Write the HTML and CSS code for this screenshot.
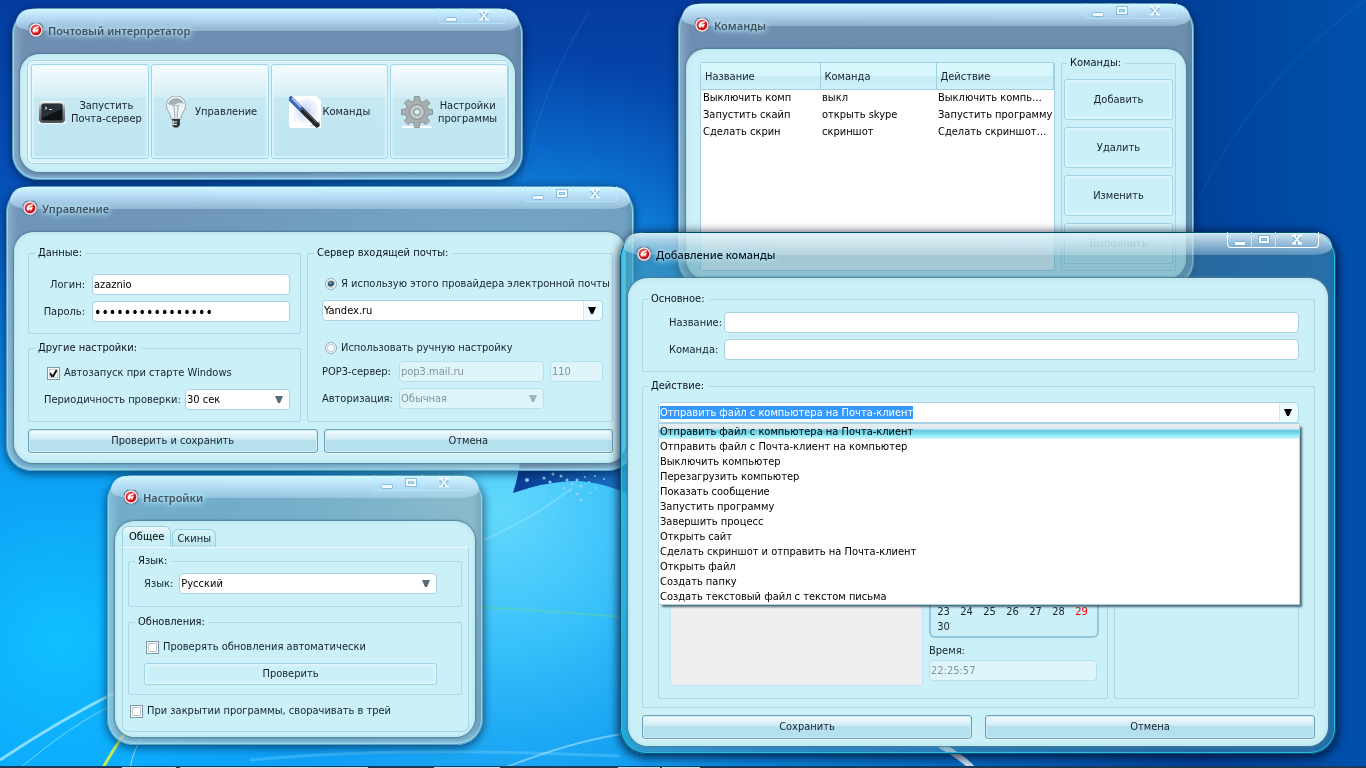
FILE: index.html
```html
<!DOCTYPE html>
<html lang="ru">
<head>
<meta charset="utf-8">
<title>Почтовый интерпретатор</title>
<link rel="stylesheet" href="styles.css">
</head>
<body>
<svg class="defs" width="0" height="0" aria-hidden="true">
  <defs>
    <radialGradient id="badge" cx=".4" cy=".35" r=".7"><stop offset="0" stop-color="#ff6a5c"/><stop offset=".6" stop-color="#e3151b"/><stop offset="1" stop-color="#c01016"/></radialGradient>
    <symbol id="app" viewBox="0 0 16 16">
      <path d="M4 .8H12L15.200 4V12L12 15.200H4L.8 12V4Z" fill="#6d7f94"/>
      <circle cx="8" cy="8" r="6.700" fill="#e8edf4"/>
      <circle cx="8" cy="8" r="5.300" fill="url(#badge)"/>
      <path d="M4.600 9.600C4.300 6.300 7 4 11.400 4.300L10 6.200C8.400 6 7.400 6.600 7.200 7.500L11 7L9 11L7.800 9.200L7 9.400L6.400 11.300Z" fill="#fff"/>
    </symbol>
    <symbol id="min" viewBox="0 0 12 12"><rect x=".5" y="7.500" width="11" height="4" rx="1" fill="#fff" stroke="#79b4dc"/></symbol>
    <symbol id="max" viewBox="0 0 12 12"><rect x="2" y="3" width="8" height="5" fill="none" stroke="#79b4dc" stroke-width="4"/><rect x="2" y="3" width="8" height="5" fill="none" stroke="#fff" stroke-width="2"/></symbol>
    <symbol id="close" viewBox="0 0 12 12"><path d="M2.500 2L9.500 10M9.500 2L2.500 10" stroke="#79b4dc" stroke-width="4" fill="none"/><path d="M2.500 1.500L9.500 9.500M9.500 1.500L2.500 9.500M1 1.500H5M7 1.500H11M1 9.500H5M7 9.500H11" stroke="#fff" stroke-width="1.800" fill="none"/></symbol>
  </defs>
</svg>

<svg class="wallpaper" viewBox="0 0 1366 768" preserveAspectRatio="none" aria-hidden="true">
  <defs>
    <linearGradient id="sky" x1="0" y1="0" x2="0" y2="1"><stop offset="0" stop-color="#053ba0"/><stop offset=".25" stop-color="#0552b8"/><stop offset=".6" stop-color="#0987e4"/><stop offset="1" stop-color="#0a9cf6"/></linearGradient>
    <radialGradient id="glow" gradientUnits="userSpaceOnUse" cx="500" cy="510" r="460"><stop offset="0" stop-color="#62d8fc"/><stop offset=".3" stop-color="#38c0fa"/><stop offset=".6" stop-color="#18a2f2" stop-opacity=".75"/><stop offset="1" stop-color="#0a80e0" stop-opacity="0"/></radialGradient>
    <radialGradient id="low" gradientUnits="userSpaceOnUse" cx="60" cy="640" r="400"><stop offset="0" stop-color="#10c0ff"/><stop offset="1" stop-color="#0aa0ff" stop-opacity="0"/></radialGradient>
    <linearGradient id="dusk" x1="0" y1="0" x2="1" y2="0"><stop offset=".46" stop-color="#00419a" stop-opacity="0"/><stop offset=".88" stop-color="#00429a"/><stop offset="1" stop-color="#0050ac"/></linearGradient>
    <linearGradient id="flag" x1="0" y1="0" x2="1" y2="0"><stop offset="0" stop-color="#083a94"/><stop offset="1" stop-color="#1b7ccc"/></linearGradient>
  </defs>
  <rect width="1366" height="768" fill="url(#sky)"/>
  <rect width="1366" height="768" fill="url(#glow)"/>
  <rect width="1366" height="768" fill="url(#low)"/>
  <rect width="1366" height="768" fill="url(#dusk)"/>
  <path d="M521 456H640V499Q600 480 572 481Q545 482 513 493Q518 478 521 456Z" fill="url(#flag)"/>
  <g fill="#8fd2f6"><circle cx="527" cy="480" r="2"/><circle cx="544" cy="478" r="1.500"/><circle cx="550" cy="482" r="1.500"/><circle cx="553" cy="474" r="1.500"/><circle cx="561" cy="476" r="1.500"/><circle cx="567" cy="480" r="1.500"/><circle cx="572" cy="484" r="1.500"/><circle cx="564" cy="488" r="1.500"/><circle cx="577" cy="480" r="1.500"/><circle cx="581" cy="486" r="1.500"/><circle cx="585" cy="477" r="1"/><circle cx="589" cy="482" r="1"/><circle cx="596" cy="488" r="1"/><circle cx="577" cy="494" r="1.500"/><circle cx="590" cy="493" r="1"/><circle cx="570" cy="491" r="1"/><circle cx="581" cy="500" r="1.500"/><circle cx="544" cy="492" r="1"/><circle cx="552" cy="516" r="1"/><circle cx="558" cy="504" r="1"/><circle cx="595" cy="476" r="1"/><circle cx="604" cy="479" r="1"/></g>
  <g fill="none">
    <path d="M0 760Q60 720 120 690" stroke="#bff1ff" stroke-opacity=".7" stroke-width="3"/>
    <path d="M20 768Q70 726 110 706" stroke="#dffaff" stroke-opacity=".5" stroke-width="1"/>
    <path d="M103 768Q118 740 136 720" stroke="#c6ec54" stroke-width="3"/>
    <path d="M130 768Q134 748 142 738" stroke="#9adfff" stroke-width="1"/>
    <path d="M250 760Q400 746 620 756" stroke="#a0e8ff" stroke-opacity=".25" stroke-width="3"/>
    <path d="M504 768Q570 742 622 734" stroke="#c0f0ff" stroke-opacity=".5" stroke-width="2"/>
    <path d="M480 607Q560 612 622 617" stroke="#5fd8a0" stroke-opacity=".5" stroke-width="2"/>
    <path d="M484 540Q540 514 572 488" stroke="#c0f0ff" stroke-opacity=".3" stroke-width="2"/>
    <path d="M940 745Q962 757 972 768" stroke="#fff" stroke-opacity=".8" stroke-width="6"/>
    <path d="M1366 0Q1240 90 1180 240" stroke="#2d7cc8" stroke-opacity=".15" stroke-width="2"/>
    <path d="M524 178Q540 90 590 10" stroke="#4aa6ea" stroke-opacity=".12" stroke-width="2"/>
  </g>
  <rect y="766" width="1366" height="2" fill="#1d3b55"/>
  <path d="M122 767.500H176M180 767.500H368M434 767.500H500M618 767.500H660M662 767.500H700" stroke="#c8e4f4" stroke-width="1"/>
</svg>

<main class="desktop">
  <section class="window w-main" aria-label="Почтовый интерпретатор">
    <header class="bar">
      <svg class="logo"><use href="#app"/></svg><h2>Почтовый интерпретатор</h2>
      <div class="ctl"><button type="button" aria-label="Свернуть"><svg><use href="#min"/></svg></button><button type="button" class="x" aria-label="Закрыть"><svg><use href="#close"/></svg></button></div>
    </header>
    <div class="body body-main">
      <div class="tools">
        <button type="button" class="tool">
          <svg width="28" height="24" viewBox="0 0 28 24"><defs><linearGradient id="tm" x1="0" y1="0" x2="0" y2="1"><stop offset="0" stop-color="#fafafa"/><stop offset=".4" stop-color="#8b9195"/><stop offset="1" stop-color="#4a5054"/></linearGradient></defs><rect y="21" width="28" height="3" rx="1" fill="#fff" opacity=".8"/><rect x="1" y="1" width="26" height="22" rx="4" fill="url(#tm)"/><rect x="3.500" y="3.500" width="21" height="17" rx="2" fill="#0e1317"/><path d="M4 4H24V9Q14 13 4 18Z" fill="#28323a"/><path d="M7 7L9 8.200L7 9.500M11 9.500H14" stroke="#e4e4e4" fill="none"/></svg>
          <span>Запустить<br>Почта-сервер</span></button>
        <button type="button" class="tool t2">
          <svg width="32" height="32" viewBox="0 0 32 32"><path d="M16 0C10 0 6.500 4 6.500 9.500C6.500 14.500 10.500 17 11.500 23H20.500C21.500 17 25.500 14.500 25.500 9.500C25.500 4 22 0 16 0Z" fill="#eef3f6" stroke="#8b9aa2" stroke-width=".8"/><path d="M8 8Q10 2 16 2Q22 2 24 8Q20 6 16 8Q12 10 8 8Z" fill="#a5b0b8"/><path d="M12 10L15 9L17 10L20 9M14 10L15 22M18 10L17 22" fill="none" stroke="#8c9ca4" stroke-width=".8"/><path d="M12 23H20V29L18 31.500H14L12 29Z" fill="#30373b"/><path d="M13 24.500V29M13 26H17M13 28.500H17" stroke="#eef2f4" stroke-width="1.200"/></svg>
          <span>Управление</span></button>
        <button type="button" class="tool t3">
          <svg width="32" height="32" viewBox="0 0 32 32"><defs><radialGradient id="wd"><stop offset="0" stop-color="#b9cdf5"/><stop offset="1" stop-color="#fff"/></radialGradient></defs><path d="M0 0H27L32 5V32H2L0 30Z" fill="#fff"/><circle cx="17" cy="15" r="14" fill="url(#wd)"/><path d="M19 2V12M14 7H24M6 16V26M2 21H10M23 8V16M19 12H27" stroke="#e9f1ff" stroke-width="1.200"/><path d="M20 30H31V25Z" fill="#b8bcc2"/><path d="M2 3L28 29" stroke="#23272b" stroke-width="5" stroke-linecap="round"/><path d="M2 3L11 12" stroke="#3e69bd" stroke-width="5" stroke-linecap="round"/><path d="M3 2L12 11" stroke="#9cc0f2" stroke-width="2"/><path d="M14 13L28 27" stroke="#646c70" stroke-width="1"/></svg>
          <span>Команды</span></button>
        <button type="button" class="tool">
          <svg width="32" height="32" viewBox="0 0 32 32"><rect x="1" y="30" width="30" height="2" fill="#fff"/><g fill="#a7afb1" stroke="#7c8789" stroke-width=".8"><path d="M13 5L13.500 .5H18.500L19 5L22 6.200L25.500 3.500L29 7L26 10.500L27 13L31.500 13.500V18.500L27 19L26 21.500L28.500 25L25 28.500L21.500 26L19 27L18.500 31.500H13.500L13 27L10.500 26L7 28.500L3.500 25L6 21.500L5 19L.5 18.500V13.500L5 13L6 10.500L3.500 7L7 3.500L10.500 6Z"/><circle cx="16" cy="16" r="7.500" fill="#b9c0c1"/><circle cx="16" cy="16" r="5.500" fill="none" stroke="#d4d9da"/><circle cx="16" cy="16" r="3" fill="#dff2f6"/></g></svg>
          <span>Настройки<br>программы</span></button>
      </div>
    </div>
  </section>

  <section class="window w-control" aria-label="Управление">
    <header class="bar">
      <svg class="logo"><use href="#app"/></svg><h2>Управление</h2>
      <div class="ctl"><button type="button" aria-label="Свернуть"><svg><use href="#min"/></svg></button><button type="button" aria-label="Развернуть"><svg><use href="#max"/></svg></button><button type="button" class="x" aria-label="Закрыть"><svg><use href="#close"/></svg></button></div>
    </header>
    <div class="body body-form">
      <div class="control-grid">
        <div class="stack">
          <fieldset class="creds">
            <legend>Данные:</legend>
            <label for="login">Логин:</label><input id="login" type="text" value="azaznio">
            <label for="pass">Пароль:</label><input id="pass" type="password" value="aaaaaaaaaaaaaaaa">
          </fieldset>
          <fieldset class="other">
            <legend>Другие настройки:</legend>
            <label class="check"><input type="checkbox" checked>Автозапуск при старте Windows</label>
            <div class="line"><label for="period">Периодичность проверки:</label><select id="period"><option>30 сек</option></select></div>
          </fieldset>
        </div>
        <fieldset class="server">
          <legend>Сервер входящей почты:</legend>
          <label class="check"><input type="radio" name="srv" checked>Я использую этого провайдера электронной почты</label>
          <select class="combo" aria-label="Провайдер"><option>Yandex.ru</option></select>
          <label class="check manual"><input type="radio" name="srv">Использовать ручную настройку</label>
          <div class="pop">
            <label for="pop3">POP3-сервер:</label><input id="pop3" type="text" value="pop3.mail.ru" disabled><input type="text" value="110" aria-label="Порт" disabled>
            <label for="auth">Авторизация:</label><select id="auth" disabled><option>Обычная</option></select>
          </div>
        </fieldset>
      </div>
      <div class="actions"><button type="button" class="push">Проверить и сохранить</button><button type="button" class="push">Отмена</button></div>
    </div>
  </section>

  <section class="window w-settings" aria-label="Настройки">
    <header class="bar">
      <svg class="logo"><use href="#app"/></svg><h2>Настройки</h2>
      <div class="ctl"><button type="button" aria-label="Свернуть"><svg><use href="#min"/></svg></button><button type="button" aria-label="Развернуть"><svg><use href="#max"/></svg></button><button type="button" class="x" aria-label="Закрыть"><svg><use href="#close"/></svg></button></div>
    </header>
    <div class="body body-settings">
      <div class="tabs" role="tablist"><button type="button" role="tab" aria-selected="true">Общее</button><button type="button" role="tab" aria-selected="false">Скины</button></div>
      <div class="panel" role="tabpanel">
        <fieldset class="lang">
          <legend>Язык:</legend>
          <label for="lang">Язык:</label><select id="lang"><option>Русский</option></select>
        </fieldset>
        <fieldset class="updates">
          <legend>Обновления:</legend>
          <label class="check"><input type="checkbox">Проверять обновления автоматически</label>
          <button type="button" class="soft">Проверить</button>
        </fieldset>
        <label class="check tray"><input type="checkbox">При закрытии программы, сворачивать в трей</label>
      </div>
    </div>
  </section>

  <section class="window w-commands" aria-label="Команды">
    <header class="bar">
      <svg class="logo"><use href="#app"/></svg><h2>Команды</h2>
      <div class="ctl"><button type="button" aria-label="Свернуть"><svg><use href="#min"/></svg></button><button type="button" aria-label="Развернуть"><svg><use href="#max"/></svg></button><button type="button" class="x" aria-label="Закрыть"><svg><use href="#close"/></svg></button></div>
    </header>
    <div class="body body-commands">
      <div class="list">
        <table>
          <thead><tr><th>Название</th><th>Команда</th><th>Действие</th></tr></thead>
          <tbody>
            <tr><td>Выключить комп</td><td>выкл</td><td>Выключить компь…</td></tr>
            <tr><td>Запустить скайп</td><td>открыть skype</td><td>Запустить программу</td></tr>
            <tr><td>Сделать скрин</td><td>скриншот</td><td>Сделать скриншот…</td></tr>
          </tbody>
        </table>
      </div>
      <fieldset class="cmds">
        <legend>Команды:</legend>
        <button type="button" class="soft">Добавить</button>
        <button type="button" class="soft">Удалить</button>
        <button type="button" class="soft">Изменить</button>
        <button type="button" class="soft" disabled>Выполнить</button>
      </fieldset>
    </div>
  </section>

  <section class="window active w-add" aria-label="Добавление команды">
    <header class="bar">
      <svg class="logo"><use href="#app"/></svg><h2>Добавление команды</h2>
      <div class="ctl"><button type="button" aria-label="Свернуть"><svg><use href="#min"/></svg></button><button type="button" aria-label="Развернуть"><svg><use href="#max"/></svg></button><button type="button" class="x" aria-label="Закрыть"><svg><use href="#close"/></svg></button></div>
    </header>
    <div class="body body-form">
      <fieldset class="basic">
        <legend>Основное:</legend>
        <label for="name">Название:</label><input id="name" type="text">
        <label for="cmd">Команда:</label><input id="cmd" type="text">
      </fieldset>
      <fieldset class="action">
        <legend>Действие:</legend>
        <div class="drop">
          <input id="act" class="combo" type="text" role="combobox" aria-label="Действие" aria-expanded="true" aria-controls="acts" value="Отправить файл с компьютера на Почта-клиент">
          <ul id="acts" role="listbox">
            <li role="option" aria-selected="true">Отправить файл с компьютера на Почта-клиент</li>
            <li role="option">Отправить файл с Почта-клиент на компьютер</li>
            <li role="option">Выключить компьютер</li>
            <li role="option">Перезагрузить компьютер</li>
            <li role="option">Показать сообщение</li>
            <li role="option">Запустить программу</li>
            <li role="option">Завершить процесс</li>
            <li role="option">Открыть сайт</li>
            <li role="option">Сделать скриншот и отправить на Почта-клиент</li>
            <li role="option">Открыть файл</li>
            <li role="option">Создать папку</li>
            <li role="option">Создать текстовый файл с текстом письма</li>
          </ul>
        </div>
        <div class="details">
          <div class="frame when">
            <textarea aria-label="Текст" disabled></textarea>
            <div class="date">
              <table class="cal"><tbody><tr><td>23</td><td>24</td><td>25</td><td>26</td><td>27</td><td>28</td><td class="sun">29</td></tr><tr><td>30</td><td></td><td></td><td></td><td></td><td></td><td></td></tr></tbody></table>
              <label for="time">Время:</label>
              <input id="time" type="text" value="22:25:57" disabled>
            </div>
          </div>
          <div class="frame"></div>
        </div>
      </fieldset>
      <div class="actions wide"><button type="button" class="push">Сохранить</button><button type="button" class="push">Отмена</button></div>
    </div>
  </section>
</main>
<script src="app.js"></script>
</body>
</html>
```
FILE: styles.css
```css
* { box-sizing: border-box; }
html, body { height: 100%; }
body {
  margin: 0;
  overflow: hidden;
  font: 11px/14px "DejaVu Sans Condensed", "Noto Sans", sans-serif;
  color: #14232e;
}
button, input, select, textarea { font: inherit; color: inherit; margin: 0; }
h2, ul { margin: 0; padding: 0; }
label { white-space: nowrap; }
.defs { position: absolute; }
.wallpaper { position: fixed; inset: 0; width: 100%; height: 100%; }
.desktop { position: relative; min-height: 100%; }

/* windows */
.window {
  position: absolute;
  display: flex;
  flex-direction: column;
  padding: 0 8px 8px;
  border-radius: 26px;
  background:
    linear-gradient(90deg, rgba(200, 240, 255, .3), transparent 12px, transparent calc(100% - 10px), rgba(40, 90, 120, .25)),
    rgba(157, 175, 183, .7);
  box-shadow: inset 0 0 0 1px rgba(20, 80, 110, .4), inset 0 0 0 2px #8fd6f0, inset 0 -3px 3px rgba(190, 245, 255, .5), 0 2px 8px 1px rgba(0, 20, 50, .6);
}
.window::before {
  content: "";
  position: absolute;
  inset: 1px 4px auto;
  height: 22px;
  border-radius: 22px 22px 26px 26px / 20px 20px 12px 12px;
  background: linear-gradient(#cdf6ff, rgba(195, 230, 254, .85) 45%, rgba(195, 230, 248, .4));
}
.window.active {
  background:
    linear-gradient(90deg, rgba(0, 190, 240, .5), transparent 20px, transparent calc(100% - 10px), rgba(0, 110, 160, .3)),
    rgba(78, 145, 170, .5);
  box-shadow: inset 0 0 0 1px rgba(0, 50, 80, .8), inset 0 0 0 2px #22bfe8, 0 2px 10px 2px rgba(0, 10, 35, .75);
}
.window.active::before { background: linear-gradient(rgba(235, 250, 255, .85), rgba(235, 248, 255, .25)); }
.w-main { left: 12px; top: 8px; width: 511px; }
.w-control { left: 6px; top: 186px; width: 628px; }
.w-settings { left: 107px; top: 475px; width: 376px; }
.w-commands { left: 678px; top: 3px; width: 516px; }
.w-add { left: 620px; top: 232px; width: 716px; }

.bar { position: relative; display: flex; align-items: flex-start; height: 46px; padding: 0 9px 0 8px; }
.logo { width: 16px; height: 16px; margin: 14px 4px 0 0; }
.bar h2 {
  padding-top: 14px;
  font: 600 11px/18px "Noto Sans", sans-serif;
  color: #41535f;
  text-shadow: 0 0 4px #c9f0ff, 0 0 6px #a9dcf0, 0 0 8px #a9dcf0;
}
.active .bar h2 { font-weight: 500; color: #05121b; }
.ctl { display: flex; margin: 0 0 0 auto; border: 1px solid #b4ecff; border-top: 0; border-radius: 0 0 4px 4px; opacity: .8; }
.active .ctl { border-color: #fff; opacity: 1; }
.ctl button { display: flex; width: 24px; height: 15px; padding: 0; align-items: center; justify-content: center; border: 0; border-right: 1px solid #b4ecff; background: none; }
.ctl .x { width: 42px; border: 0; }
.ctl svg { width: 12px; height: 12px; }

.body {
  position: relative;
  border-radius: 20px;
  background: #ccf0f7;
  box-shadow: 0 0 2px 1px #4b7b93, inset 0 0 4px 1px #b9e4ee;
}
.body-form { display: flex; flex-direction: column; gap: 7px; padding: 14px 13px 10px 14px; }

/* toolbar */
.body-main { padding: 6px 6px 8px 7px; }
.tools { display: grid; grid-template-columns: repeat(4, minmax(0, 1fr)); gap: 2px; padding: 3px 0 4px 3px; border: 1px solid #a3d6e8; border-radius: 6px; background: #d9f4fa; box-shadow: inset 0 0 0 1px #eefbfe; }
.tool {
  display: flex; height: 95px; padding: 0 4px; align-items: center; justify-content: center; gap: 5px;
  border: 1px solid #9fd5ea; border-radius: 3px; line-height: 13px; white-space: nowrap;
  background: linear-gradient(#f6fcfe, #d3eef4 34%, #c6e8f1 36%, #bfe6f3);
  box-shadow: inset 0 0 3px 1px #ecfaff;
}
.tool.t2 { gap: 3px; padding-right: 6px; }
.tool.t3 { gap: 2px; }

/* groups */
fieldset { min-width: 0; margin: 0; border: 1px solid #aed6e4; border-radius: 2px; padding: 14px 10px 11px 6px; }
legend { padding: 0 4px 0 3px; color: #0a141c; }
input[type=text], input[type=password], select {
  width: 100%; min-width: 0; height: 21px; padding: 0 1px; border: 1px solid #a9d3e5; border-radius: 4px; background-color: #fff; color: #000; outline: 0;
}
input[type=password] { font-size: 14px; }
select {
  appearance: none;
  background-image: url("data:image/svg+xml,%3Csvg xmlns='http://www.w3.org/2000/svg' width='8' height='8'%3E%3Cpath d='M0 0H8L5 7H3Z' fill='%23546c78'/%3E%3C/svg%3E");
  background-repeat: no-repeat;
  background-position: right 6px center;
}
select.combo, input.combo[type=text] {
  background-image: url("data:image/svg+xml,%3Csvg xmlns='http://www.w3.org/2000/svg' width='8' height='8'%3E%3Cpath d='M0 0H8L5 7H3Z'/%3E%3C/svg%3E"), linear-gradient(90deg, #cdebf2 1px, #eefbfe 1px);
  background-repeat: no-repeat;
  background-position: right 6px center, right;
  background-size: auto, 19px 100%;
}
input[type=text]:disabled, select:disabled { border-color: #b5e1ec; background-color: #e0f5fa; color: #82959d; opacity: 1; }
select:disabled { background-image: url("data:image/svg+xml,%3Csvg xmlns='http://www.w3.org/2000/svg' width='8' height='8'%3E%3Cpath d='M0 0H8L5 7H3Z' fill='%2399b4bf'/%3E%3C/svg%3E"); }
.check { display: flex; align-items: center; gap: 4px; }
.check input { appearance: none; flex: none; width: 13px; height: 13px; border: 1px solid #7d97a8; background: #fff; box-shadow: inset 0 0 0 1px #fff, inset 0 0 0 2px #b9ccd6; }
.check input[type=radio] { width: 12px; height: 12px; border-color: #9aabb8; border-radius: 50%; }
.check input[type=radio]:checked { background: radial-gradient(circle at 45% 40%, #7aa6c0, #0c3552 3px, #fff 4px); }
.check input[type=checkbox]:checked { background: #fff url("data:image/svg+xml,%3Csvg xmlns='http://www.w3.org/2000/svg' width='11' height='11'%3E%3Cpath d='M2 5L4.500 9L9 1.500' fill='none' stroke='%23111' stroke-width='2'/%3E%3C/svg%3E") no-repeat; }

.push {
  height: 24px; border: 1px solid #6f9fb7; border-radius: 3px;
  background: linear-gradient(#f4fcff, #d2edf5 40%, #b5dfec 50%, #b4e2f0);
  box-shadow: 0 1px #effbfe, inset 0 0 1px 1px #cdeef8;
}
.soft { border: 1px solid #a0d4e8; border-radius: 3px; background: #ccf0f7; box-shadow: inset 0 0 3px 1px #e9fafd; }
.soft:disabled { color: #7b929c; }
.actions { display: grid; grid-template-columns: 1fr 1fr; gap: 6px; }
.actions.wide { gap: 13px; }

.control-grid { display: grid; grid-template-columns: 273px 1fr; gap: 6px; }
.stack { display: flex; flex-direction: column; gap: 7px; }
.creds { display: grid; grid-template-columns: 50px 1fr; column-gap: 7px; row-gap: 6px; align-items: center; }
.creds label { text-align: right; }
.other { flex: 1; padding-top: 11px; padding-bottom: 10px; }
.other .check { margin-left: 12px; }
.line { display: flex; gap: 4px; align-items: center; justify-content: space-between; margin: 9px 0 0 9px; }
.line select { width: 105px; }
.server { padding: 17px 9px 12px 6px; }
.server > .combo { width: calc(100% - 8px); margin: 9px 0 0 8px; }
.server > .check { margin-left: 11px; }
.server > .manual { margin: 20px 0 6px 11px; }
.pop { display: grid; grid-template-columns: 71px 145px 1fr; gap: 6px; align-items: center; margin-left: 8px; }

/* settings */
.body-settings { padding: 5px 6px 5px 7px; }
.tabs { display: flex; align-items: flex-end; gap: 1px; }
.tabs button { height: 18px; padding: 0 4px; border: 1px solid #98cfe2; border-bottom: 0; border-radius: 6px 6px 0 0; background: linear-gradient(#d9f6fb, #b8e2ee); }
.tabs [aria-selected=true] { height: 21px; padding: 0 6px; background: linear-gradient(#effbfd, #ccf0f7 40%); color: #000; }
.panel { display: flex; flex-direction: column; padding: 6px 6px 13px 5px; border: 1px solid #a5d6e6; border-top-color: #effcff; border-radius: 0 0 7px 7px; }
.lang { display: flex; align-items: center; gap: 6px; padding: 5px 24px 12px 15px; }
.lang legend, .updates legend { margin-left: -9px; }
.updates { display: flex; flex-direction: column; padding: 11px 24px 9px 15px; margin-top: 8px; gap: 9px; }
.updates .check { margin-left: 2px; }
.updates .soft { height: 22px; }
.tray { margin: 9px 0 0 2px; }

/* commands */
.body-commands { display: grid; grid-template-columns: 1fr 115px; gap: 6px; padding: 7px 10px 8px 14px; }
.list { margin-top: 6px; border: 1px solid #a3d2e4; border-radius: 2px; background: #fff; }
.list table { width: 100%; table-layout: fixed; border-collapse: collapse; }
th, td { padding: 0; font-weight: normal; text-align: left; white-space: nowrap; }
.list th { height: 26px; padding: 2px 0 0 4px; border: solid #9dd2e3; border-width: 0 1px 1px 0; background: linear-gradient(#d7f7fd 50%, #c7ecf5 51%, #cef1f8); }
.list th:first-child { width: 119px; }
.list th:nth-child(2) { width: 116px; }
.list td { height: 17px; padding-left: 2px; color: #000; }
.cmds { display: flex; flex-direction: column; gap: 7px; padding: 9px 2px 6px; }
.cmds legend { margin-left: 3px; }
.cmds .soft { height: 41px; }

/* add command */
.w-add .body { padding-bottom: 7px; }
.basic { display: grid; grid-template-columns: 50px 1fr; column-gap: 5px; row-gap: 6px; align-items: center; padding: 6px 15px 11px 26px; }
.basic legend { margin-left: -21px; }
.action { padding: 9px 15px 8px; }
.action legend { margin-left: -10px; }
.drop { position: relative; }
.drop ::selection { background: #3399ff; color: #fff; }
.drop ul {
  position: absolute; z-index: 2; top: 21px; left: 0; right: -1px; list-style: none;
  border: 1px solid #a9d3e5; background: #fff; color: #000; box-shadow: 3px 3px 2px -1px rgba(40, 70, 85, .8);
}
.drop li { height: 15px; padding-left: 1px; line-height: 15px; }
.drop [aria-selected=true] { background: linear-gradient(#e7eef0, #dcebef 30%, #5fc8e0 45%, #8fe9f6 75%, #d7fbff); border-radius: 2px; }
.details { display: grid; grid-template-columns: 450px 1fr; gap: 6px; margin-top: 6px; }
.frame { border: 1px solid #aed6e4; border-radius: 2px; }
.when { display: grid; grid-template-columns: 253px 1fr; gap: 6px; padding: 170px 8px 12px 11px; }
textarea { width: 100%; height: 86px; resize: none; border: 1px solid #c0e6ef; border-radius: 3px; background: #efefef; }
.date { display: flex; flex-direction: column; }
.cal { table-layout: fixed; padding: 4px 4px 2px 1px; border: 2px solid #8fc8dd; border-top: 0; border-radius: 0 0 6px 6px; border-spacing: 0; }
.cal td { height: 15px; text-align: center; }
.cal .sun { color: #f00; }
.date label { margin-top: 6px; }
.date input[type=text] { width: 168px; margin-top: 2px; }
```
FILE: app.js
```js
const act = document.getElementById('act');
act.focus();
act.select();
```
